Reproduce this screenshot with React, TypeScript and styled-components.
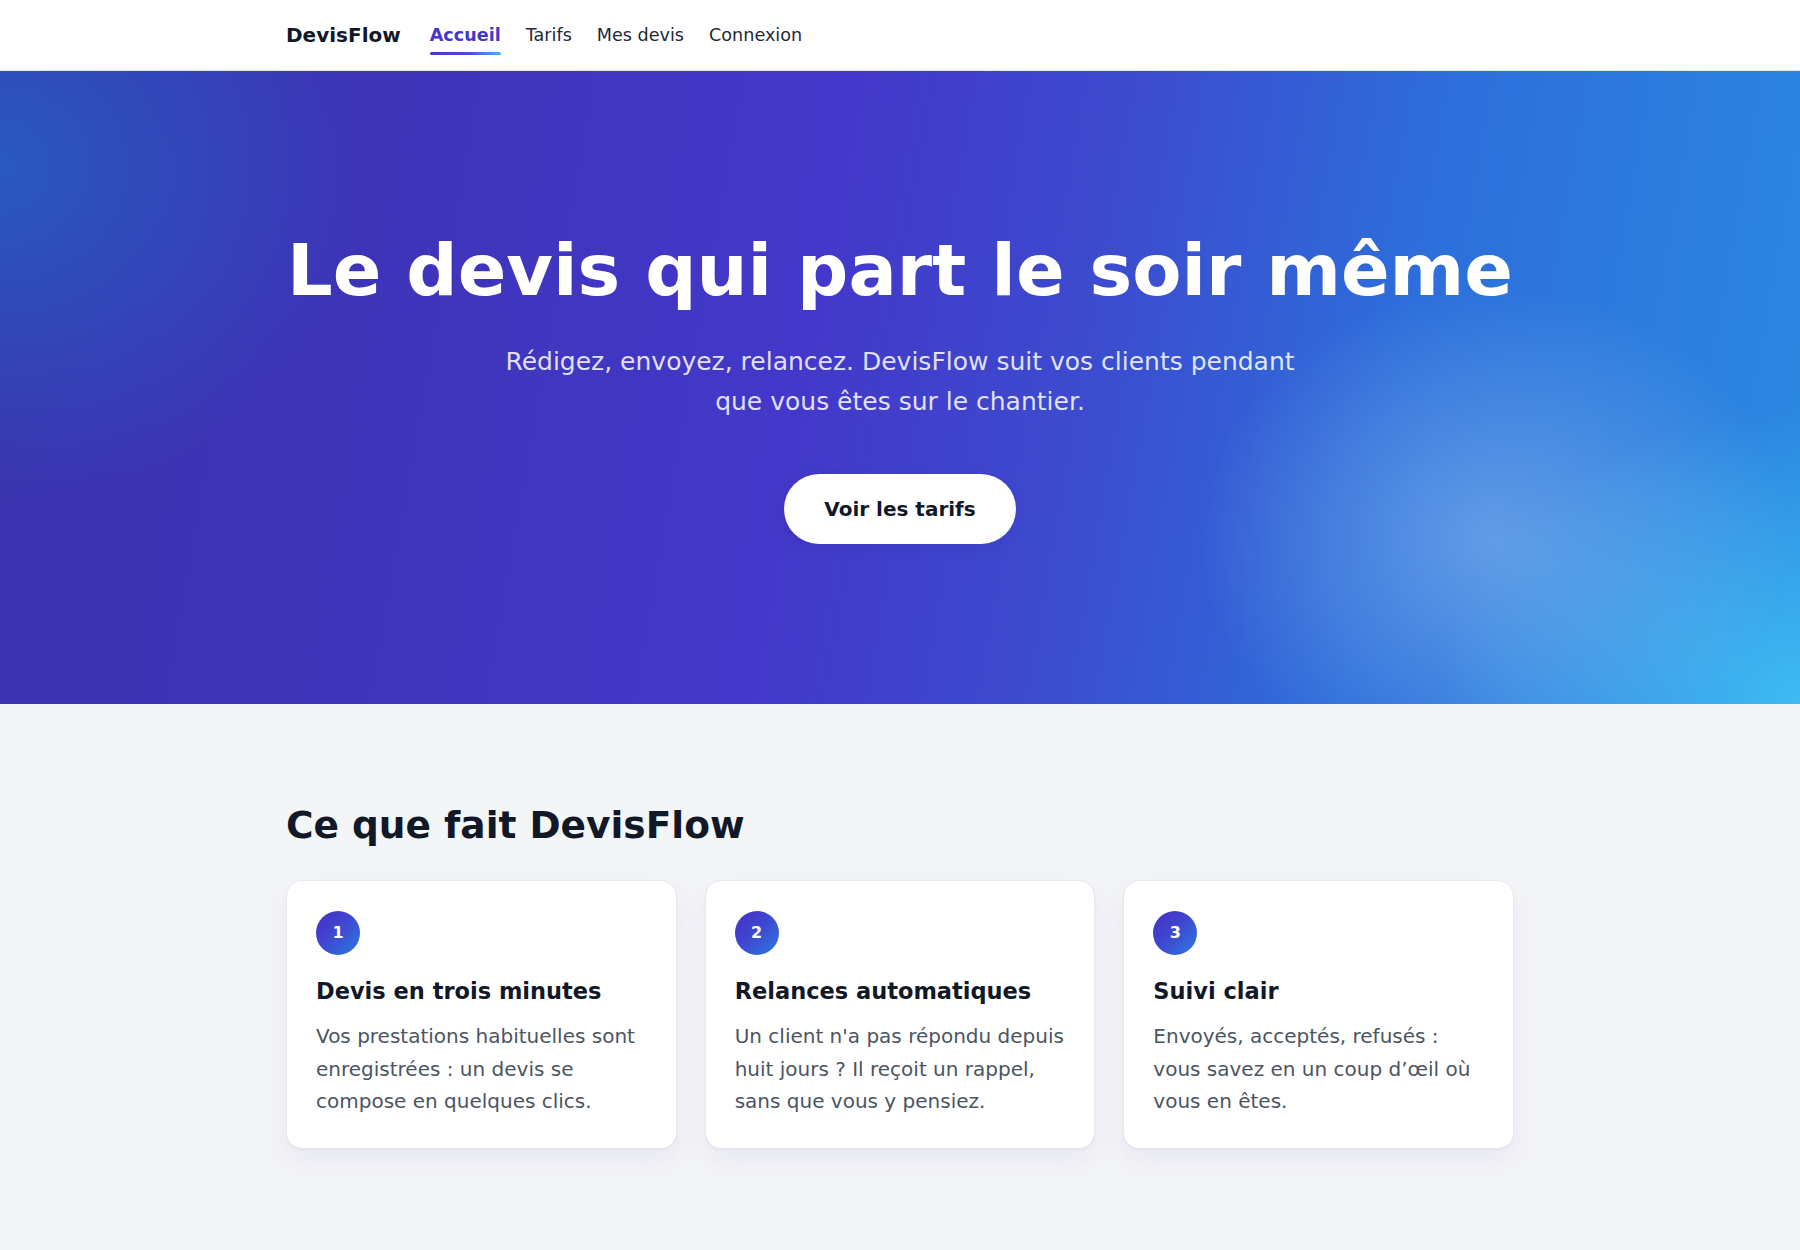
import React from 'react'
import styled, { createGlobalStyle } from 'styled-components'

const GlobalStyle = createGlobalStyle`
  * { box-sizing: border-box; }
  html, body {
    margin: 0;
    padding: 0;
    background: #f4f5f7;
    font-family: "DejaVu Sans", "Noto Sans", sans-serif;
    -webkit-font-smoothing: antialiased;
  }
`

const Page = styled.div`
  min-height: 1250px;
  background: #f4f5f7;
`

const TopBar = styled.header`
  background: #fff;
  border-bottom: 1px solid #e5e7eb;
`

const Container = styled.div`
  width: 1228px;
  margin: 0 auto;
`

const NavRow = styled(Container)`
  height: 70px;
  display: flex;
  align-items: center;
  gap: 29px;
`

const Logo = styled.a`
  font-size: 20px;
  line-height: 28px;
  font-weight: 700;
  color: #111827;
  text-decoration: none;
`

const NavLinks = styled.nav`
  display: flex;
  align-items: center;
  gap: 25px;
`

const NavLink = styled.a<{ $active?: boolean }>`
  position: relative;
  display: block;
  padding: 8px 0;
  font-size: 17.6px;
  line-height: 24px;
  font-weight: ${p => (p.$active ? 700 : 400)};
  color: ${p => (p.$active ? '#4338ca' : '#1f2937')};
  text-decoration: none;

  &::after {
    content: '';
    display: ${p => (p.$active ? 'block' : 'none')};
    position: absolute;
    left: 0;
    right: 0;
    bottom: 0;
    height: 3px;
    border-radius: 2px;
    background: linear-gradient(90deg, #4338ca 0%, #4f46e5 55%, #38bdf8 100%);
  }
`

const Hero = styled.section`
  padding: 160px 24px 160px;
  display: flex;
  flex-direction: column;
  align-items: center;
  text-align: center;
  color: #fff;
  background:
    radial-gradient(420px 360px at 83% 74%, rgba(140, 188, 238, 0.55), rgba(140, 188, 238, 0) 70%),
    radial-gradient(520px 420px at 100% 100%, rgba(66, 196, 245, 0.85), rgba(66, 196, 245, 0) 70%),
    radial-gradient(520px 480px at 0% 15%, rgba(38, 96, 196, 0.85), rgba(38, 96, 196, 0) 70%),
    linear-gradient(100deg, #3a33ad 0%, #3d34b8 20%, #4338ca 45%, #3c4ccf 60%, #2d6edb 76%, #2b8ae2 100%);
`

const Headline = styled.h1`
  margin: 0;
  font-size: 71.7px;
  line-height: 1.1;
  font-weight: 700;
  color: #fff;
`

const Lead = styled.p`
  margin: 32px 0 0;
  max-width: 810px;
  font-size: 25px;
  line-height: 40px;
  color: rgba(255, 255, 255, 0.86);
`

const CtaButton = styled.a`
  margin-top: 52px;
  display: inline-block;
  padding: 22px 40px;
  border-radius: 999px;
  background: #fff;
  color: #111827;
  font-size: 20px;
  line-height: 26px;
  font-weight: 700;
  text-decoration: none;
  box-shadow: 0 4px 14px rgba(20, 20, 80, 0.08);
`

const Features = styled.section`
  padding: 99px 0 96px;
`

const SectionTitle = styled.h2`
  margin: 0 0 32px;
  font-size: 37.5px;
  line-height: 1.2;
  font-weight: 700;
  color: #111827;
`

const CardGrid = styled.div`
  display: grid;
  grid-template-columns: repeat(3, 1fr);
  gap: 28px;
`

const Card = styled.article`
  background: #fff;
  border: 1px solid #e6e8ee;
  border-radius: 16px;
  padding: 30px 29px 30px;
  box-shadow: 0 1px 2px rgba(16, 24, 40, 0.04), 0 12px 28px rgba(67, 56, 202, 0.07);
`

const StepBadge = styled.div`
  width: 44px;
  height: 44px;
  border-radius: 50%;
  display: flex;
  align-items: center;
  justify-content: center;
  background: linear-gradient(135deg, #4630c4 0%, #3f46cf 45%, #2b7be0 100%);
  color: #fff;
  font-size: 16px;
  font-weight: 700;
`

const CardTitle = styled.h3`
  margin: 22px 0 14px;
  font-size: 22.5px;
  line-height: 1.3;
  font-weight: 700;
  color: #111827;
`

const CardText = styled.p`
  margin: 0;
  font-size: 20px;
  line-height: 32.5px;
  color: #4b5563;
`

const features = [
  {
    n: 1,
    title: 'Devis en trois minutes',
    text: 'Vos prestations habituelles sont enregistrées : un devis se compose en quelques clics.',
  },
  {
    n: 2,
    title: 'Relances automatiques',
    text: "Un client n'a pas répondu depuis huit jours ? Il reçoit un rappel, sans que vous y pensiez.",
  },
  {
    n: 3,
    title: 'Suivi clair',
    text: 'Envoyés, acceptés, refusés : vous savez en un coup d’œil où vous en êtes.',
  },
]

export default function App() {
  return (
    <>
      <GlobalStyle />
      <Page>
        <TopBar>
          <NavRow>
            <Logo href="#">DevisFlow</Logo>
            <NavLinks>
              <NavLink href="#" $active>Accueil</NavLink>
              <NavLink href="#">Tarifs</NavLink>
              <NavLink href="#">Mes devis</NavLink>
              <NavLink href="#">Connexion</NavLink>
            </NavLinks>
          </NavRow>
        </TopBar>

        <Hero>
          <Headline>Le devis qui part le soir même</Headline>
          <Lead>
            Rédigez, envoyez, relancez. DevisFlow suit vos clients pendant que vous êtes sur le chantier.
          </Lead>
          <CtaButton href="#">Voir les tarifs</CtaButton>
        </Hero>

        <Features>
          <Container>
            <SectionTitle>Ce que fait DevisFlow</SectionTitle>
            <CardGrid>
              {features.map(f => (
                <Card key={f.n}>
                  <StepBadge>{f.n}</StepBadge>
                  <CardTitle>{f.title}</CardTitle>
                  <CardText>{f.text}</CardText>
                </Card>
              ))}
            </CardGrid>
          </Container>
        </Features>
      </Page>
    </>
  )
}
